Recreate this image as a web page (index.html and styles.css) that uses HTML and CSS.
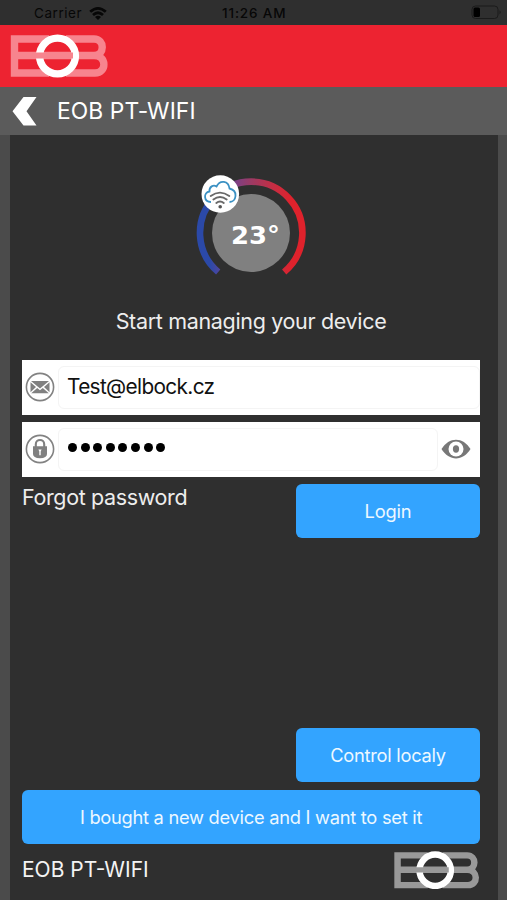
FILE: index.html
```html
<!DOCTYPE html>
<html lang="en">
<head>
<meta charset="utf-8">
<title>EOB PT-WIFI</title>
<link rel="stylesheet" href="styles.css">
</head>
<body>
<svg class="defs" width="0" height="0" aria-hidden="true">
  <symbol id="eob" viewBox="0 0 98 44">
    <path class="letters" d="M39 5H4.5V39H39M56 5H84C95 5 95 21.5 84 21.5H4.5M84 21.5C97 21.5 97 39 85 39H56"/>
    <circle class="ring" cx="47.5" cy="22" r="17.9"/>
    <path class="bar" d="M25 18.5h38v6H25z"/>
  </symbol>
</svg>
<div class="screen">
  <div class="status">
    <span class="carrier">Carrier</span>
    <svg class="wifi" width="20" height="15" viewBox="0 0 20 15"><path d="M2.2 5.8Q10-1 17.8 5.8M5 9Q10 4.6 15 9" fill="none" stroke="#070707" stroke-width="2.8"/><path d="M7 11Q10 8.7 13 11L10 14Z" fill="#070707"/></svg>
    <span class="clock">11:26 AM</span>
    <svg class="battery" width="31" height="15" viewBox="0 0 31 15"><rect x="1" y="1" width="26" height="12.5" rx="3.5" fill="none" stroke="#1b1b1b"/><rect x="2.5" y="2.5" width="6.5" height="9.5" rx="1.5"/><path d="M28.5 5.2Q31 7.2 28.5 9.2Z" fill="#1b1b1b"/></svg>
  </div>
  <header class="brand"><svg class="logo"><use href="#eob"/></svg></header>
  <nav class="title">
    <svg width="26" height="32" viewBox="0 0 26 32"><path d="M11.5 2H24.5L14.5 16.2L24.5 30.5H11.5L.5 16.2Z" fill="#fff"/></svg>
    <h1>EOB PT-WIFI</h1>
  </nav>
  <main class="panel">
    <svg class="gauge" width="112" height="104" viewBox="195 175 112 104">
      <defs><linearGradient id="heat" gradientUnits="userSpaceOnUse" x1="210" y1="0" x2="292" y2="0"><stop offset="0" stop-color="#2b49a8"/><stop offset=".2" stop-color="#684397"/><stop offset=".5" stop-color="#9c3a64"/><stop offset=".8" stop-color="#c92c40"/><stop offset="1" stop-color="#df222c"/></linearGradient></defs>
      <path d="M218.2 272A51.2 51.2 0 1 1 284.2 272" fill="none" stroke="url(#heat)" stroke-width="6.6"/>
      <circle cx="251" cy="233" r="39" fill="#808080"/>
      <text x="231" y="243.5" textLength="49" lengthAdjust="spacingAndGlyphs">23°</text>
      <circle cx="220.3" cy="194" r="18.8" fill="#fff"/>
      <path d="M211 202C203.5 202 203.2 192.5 209.5 191.5C209 186.5 213.5 184.5 216.5 186.5C220 179.5 228.5 180.5 229.5 188.5C238.5 190.5 236.5 202 229.5 202" fill="none" stroke="#3b91c3" stroke-width="1.8"/>
      <path d="M210.7 196Q220 189.3 229.3 196M213.4 199.5Q220 194.5 226.7 199.5M216.3 203Q220 200 223.8 203" fill="none" stroke="#696969" stroke-width="1.9" stroke-linecap="round"/>
      <circle cx="220.2" cy="206.7" r="1.8" fill="#555"/>
    </svg>
    <p class="intro">Start managing your device</p>
    <div class="field">
      <svg class="icon" width="30" height="30" viewBox="0 0 30 30"><circle cx="15" cy="15" r="13.6" fill="none" stroke="#828282" stroke-width="1.6"/><path d="M6 9H24L15 16.5Z M5.5 10.3L11 15L5.5 20.2Z M24.5 10.3L19 15L24.5 20.2Z M6.2 21.2L12.2 16L15 18.3L17.8 16L23.8 21.2Z" fill="#808080"/></svg>
      <div class="input email">Test@elbock.cz</div>
    </div>
    <div class="field">
      <svg class="icon" width="30" height="30" viewBox="0 0 30 30"><circle cx="15" cy="15" r="13.6" fill="none" stroke="#828282" stroke-width="1.6"/><path d="M10.8 13V10.3C10.8 4.6 19.2 4.6 19.2 10.3V13" fill="none" stroke="#808080" stroke-width="2.1"/><path d="M8 12.2H22V20Q22 24 15 24.3Q8 24 8 20Z" fill="#808080"/><path d="M13.4 15.5h3.2l-.9 2v3.8h-1.4v-3.8z" fill="#fff"/></svg>
      <div class="input password"><i></i><i></i><i></i><i></i><i></i><i></i><i></i><i></i></div>
      <svg class="eye" width="30" height="20" viewBox="0 0 30 20"><path d="M.5 10C8-2.5 22-2.5 29.5 10C22 22.5 8 22.5.5 10Z" fill="#777"/><circle cx="15" cy="10" r="7.5" fill="#fff"/><ellipse cx="15" cy="10" rx="3.1" ry="3.7" fill="#777"/></svg>
    </div>
    <div class="actions">
      <span class="forgot">Forgot password</span>
      <div class="button short login">Login</div>
    </div>
    <div class="button short local">Control localy</div>
    <div class="button setup">I bought a new device and I want to set it</div>
    <footer><span class="model">EOB PT-WIFI</span><svg class="logo small"><use href="#eob"/></svg></footer>
  </main>
</div>
</body>
</html>
```
FILE: styles.css
```css
* { box-sizing: border-box; }
body { margin: 0; font-family: Inter, "Liberation Sans", sans-serif; }
.defs { position: absolute; }
svg { flex-shrink: 0; }
.screen { width: 507px; height: 900px; display: flex; flex-direction: column; background: #4b4b4b; overflow: hidden; }
.status { height: 25px; flex-shrink: 0; display: grid; grid-template-columns: 54px 134px 249px 31px; padding-left: 34px; background: #2f2f2f; color: #070707; font-size: 13.5px; line-height: 26px; }
.carrier { letter-spacing: .55px; }
.wifi { margin-top: 6px; }
.clock { font-weight: 500; font-size: 13.5px; letter-spacing: .85px; }
.battery { margin-top: 5px; }
.brand { height: 61.5px; flex-shrink: 0; background: #ed2331; padding: 9px 0 0 10px; }
.logo { display: block; width: 98px; height: 44px; color: #f7848e; }
.letters { fill: none; stroke: currentColor; stroke-width: 7.4; }
.bar { fill: currentColor; }
.ring { fill: none; stroke: #fff; stroke-width: 7.4; }
.title { height: 48.5px; flex-shrink: 0; background: #5b5b5b; display: flex; align-items: center; padding-left: 12px; }
h1 { margin: 0 0 0 19px; color: #fff; font-weight: 400; font-size: 22.8px; letter-spacing: .1px; line-height: 30px; }
.panel { flex: 1; margin: 0 9px 0 9.5px; padding: 40px 18px 0 12.5px; background: #2f2f2f; display: flex; flex-direction: column; }
.gauge { margin-left: 172.5px; }
.gauge text { fill: #fff; font: 700 25px "DejaVu Sans", sans-serif; }
.intro { margin: 26.5px 0 23.5px; height: 31px; line-height: 31px; text-align: center; color: #ededed; font-size: 21.5px; letter-spacing: -.33px; white-space: nowrap; }
.field { height: 54.7px; margin-bottom: 7.3px; flex-shrink: 0; display: flex; align-items: center; background: #fff; padding-left: 3px; }
.icon { margin-right: 3px; }
.input { height: 43px; flex: 1; border: 1.5px solid #f4f4f4; border-radius: 6px; padding-left: 8px; display: flex; align-items: center; color: #111; font-size: 20.8px; }
.email { padding-bottom: 2px; letter-spacing: -.65px; }
.password { gap: 3.6px; padding-left: 9px; padding-bottom: 3px; }
.password i { width: 9px; height: 9px; border-radius: 50%; background: #000; }
.eye { margin: 0 9px 0 3px; }
.actions { display: flex; justify-content: space-between; }
.forgot { color: #ededed; font-size: 21.5px; letter-spacing: -.37px; line-height: 26px; white-space: nowrap; }
.button { height: 54px; flex-shrink: 0; display: flex; align-items: center; justify-content: center; border-radius: 6px; background: #33a4ff; color: #edf8ff; font-size: 18.3px; letter-spacing: -.27px; white-space: nowrap; }
.short { width: 184px; }
.login { letter-spacing: -.15px; }
.local { margin: auto 0 7.5px auto; }
footer { height: 56.5px; flex-shrink: 0; display: flex; justify-content: space-between; padding-top: 7px; color: #f4f4f4; }
.model { font-size: 21px; line-height: 38px; }
.logo.small { width: 87px; height: 38.5px; color: #999; }
```
